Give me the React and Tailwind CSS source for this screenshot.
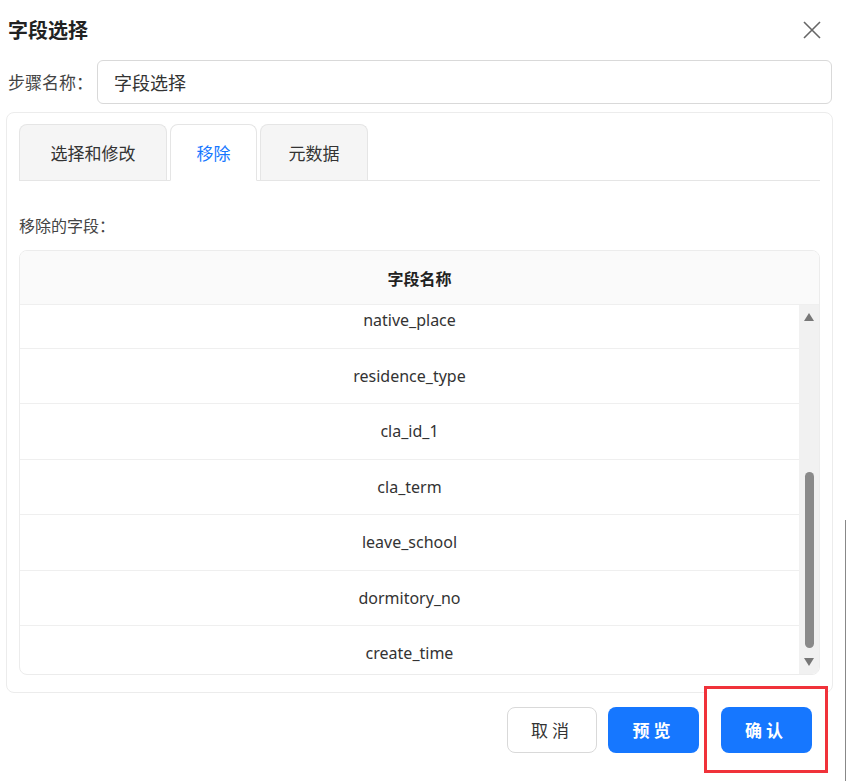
export default function App() {
  const rows = ["native_place","residence_type","cla_id_1","cla_term","leave_school","dormitory_no","create_time"];
  const f = { fontFamily: '"Noto Sans CJK SC", "Noto Sans", sans-serif' };
  return (
    <div className="w-[850px] h-[781px] bg-white relative overflow-hidden text-[#333]" style={f}>
      <div className="absolute right-[4px] top-[520px] bottom-0 w-px bg-[#888]" />
      <div className="flex items-center justify-between pl-[8px] pr-[28px] h-[60px]">
        <div className="text-[20px] font-bold text-[#222]">字段选择</div>
        <svg width="20" height="20" viewBox="0 0 20 20" stroke="#666" strokeWidth="1.6"><path d="M2 2L18 18M18 2L2 18" /></svg>
      </div>
      <div className="flex items-center pl-[8px] pr-[18px] gap-[4px]">
        <span className="text-[17px] text-[#444]">步骤名称：</span>
        <div className="flex-1 h-[44px] border border-[#d9d9d9] rounded-[6px] flex items-center px-[16px] text-[18px] text-[#333]">字段选择</div>
      </div>
      <div className="relative mx-[6px] mr-[17px] mt-[8px] h-[581px] border border-[#ececec] rounded-[8px] px-[12px] pt-[11px]">
        <div className="flex items-end gap-[3px] border-b border-[#e5e5e5] h-[57px]">
          <div className="w-[148px] h-[56px] bg-[#f5f5f5] border border-[#e5e5e5] border-b-0 rounded-t-[8px] flex items-center justify-center text-[17px] text-[#333]">选择和修改</div>
          <div className="w-[87px] h-[57px] bg-white border border-[#e5e5e5] border-b-white rounded-t-[8px] flex items-center justify-center text-[17px] text-[#1677ff] -mb-px">移除</div>
          <div className="w-[108px] h-[56px] bg-[#f5f5f5] border border-[#e5e5e5] border-b-0 rounded-t-[8px] flex items-center justify-center text-[17px] text-[#333]">元数据</div>
        </div>
        <div className="mt-[32px] text-[16px] text-[#444]">移除的字段：</div>
        <div className="mt-[13px] h-[425px] border border-[#ececec] rounded-[8px] overflow-hidden flex flex-col">
          <div className="h-[54px] shrink-0 bg-[#fafafa] border-b border-[#efefef] flex items-center justify-center text-[16px] font-bold text-[#222]">字段名称</div>
          <div className="flex-1 flex overflow-hidden">
            <div className="flex-1 overflow-hidden">
              <div className="-mt-[12px]">
                {rows.map((r) => (
                  <div key={r} className="h-[55.5px] border-b border-[#efefef] flex items-center justify-center text-[16px] text-[#333]" style={{ fontFamily: '"Noto Sans", sans-serif' }}>{r}</div>
                ))}
              </div>
            </div>
            <div className="w-[20px] bg-[#f1f1f1] flex flex-col items-center">
              <svg width="12" height="10" viewBox="0 0 12 10" className="mt-[7px]"><path d="M6 1L11 9H1z" fill="#777" /></svg>
              <div className="mt-[150px] w-[9px] h-[176px] bg-[#8a8a8a] rounded-[5px]" />
              <svg width="12" height="10" viewBox="0 0 12 10" className="mt-[9px]"><path d="M1 1H11L6 9z" fill="#777" /></svg>
            </div>
          </div>
        </div>
      </div>
      <div className="relative flex justify-end items-center gap-[11px] pr-[22px] -mt-[7px]">
        <div className="w-[90px] h-[46px] border border-[#d9d9d9] rounded-[8px] flex items-center justify-center text-[17px] tracking-[4px] text-[#333] bg-white">取消</div>
        <div className="w-[91px] h-[46px] bg-[#1677ff] rounded-[8px] flex items-center justify-center text-[17px] tracking-[4px] text-white font-bold">预览</div>
        <div className="-ml-[6px] border-[3px] border-[#f0323a] w-[124px] h-[87px] flex items-center justify-center bg-white">
          <div className="w-[91px] h-[46px] bg-[#1677ff] rounded-[8px] flex items-center justify-center text-[17px] tracking-[4px] text-white font-bold">确认</div>
        </div>
      </div>
    </div>
  );
}
